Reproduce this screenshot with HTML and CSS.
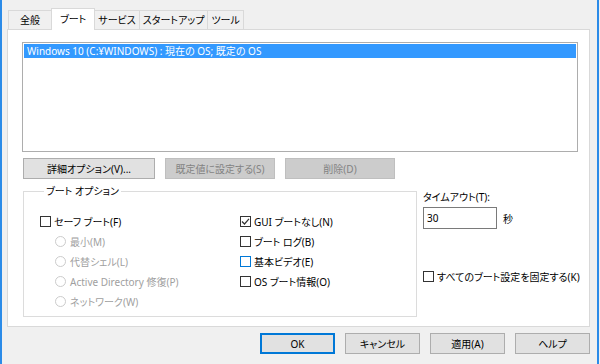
FILE: index.html
```html
<!DOCTYPE html>
<html lang="ja">
<head>
  <meta charset="UTF-8" />
  <title>システム構成</title>
  <link rel="stylesheet" href="styles.css">
</head>
<body>
  <div class="window">

    <!-- Tabs -->
    <div class="tabs">
      <div class="tab">全般</div>
      <div class="tab active">ブート</div>
      <div class="tab">サービス</div>
      <div class="tab">スタートアップ</div>
      <div class="tab">ツール</div>
    </div>

    <div class="panel">
      <div class="listbox">
        <div class="list-row selected">Windows 10 (C:¥WINDOWS) : 現在の OS; 既定の OS</div>
      </div>

      <div class="btn-row">
        <button class="btn wide">詳細オプション(V)...</button>
        <button class="btn mid" disabled>既定値に設定する(S)</button>
        <button class="btn mid" disabled>削除(D)</button>
      </div>

      <div class="lower">
        <fieldset class="group">
          <legend>ブート オプション</legend>
          <div class="cols">
            <div class="col">
              <div class="opt"><span class="box"></span>セーフ ブート(F)</div>
              <div class="opt radio"><span class="dot"></span>最小(M)</div>
              <div class="opt radio"><span class="dot"></span>代替シェル(L)</div>
              <div class="opt radio"><span class="dot"></span>Active Directory 修復(P)</div>
              <div class="opt radio"><span class="dot"></span>ネットワーク(W)</div>
            </div>
            <div class="col right">
              <div class="opt">
                <span class="box">
                  <svg width="9" height="9" viewBox="0 0 9 9"><path d="M1 4.5 L3.5 7 L8 1.8" fill="none" stroke="#333" stroke-width="1.2"/></svg>
                </span>GUI ブートなし(N)
              </div>
              <div class="opt"><span class="box"></span>ブート ログ(B)</div>
              <div class="opt"><span class="box focus"></span>基本ビデオ(E)</div>
              <div class="opt"><span class="box"></span>OS ブート情報(O)</div>
            </div>
          </div>
        </fieldset>

        <div class="side">
          <div class="timeout-label">タイムアウト(T):</div>
          <div class="timeout-row">
            <div class="textbox">30</div>
            <span>秒</span>
          </div>
          <div class="opt lock"><span class="box"></span>すべてのブート設定を固定する(K)</div>
        </div>
      </div>
    </div>

    <div class="footer">
      <button class="btn foot default">OK</button>
      <button class="btn foot">キャンセル</button>
      <button class="btn foot">適用(A)</button>
      <button class="btn foot">ヘルプ</button>
    </div>
  </div>
</body>
</html>
```

FILE: styles.css
```css
body {
  margin: 0;
  font-family: "Noto Sans", "Noto Sans CJK JP", sans-serif;
  font-size: 10px;
  font-feature-settings: "palt";
  color: #000;
  background: #f0f0f0;
}

.window {
  width: 599px;
  height: 364px;
  box-sizing: border-box;
  border-left: 2px solid #2b8be8;
  border-right: 2px solid #2b8be8;
  padding: 8px 0 0 5px;
  background: #f0f0f0;
}

/* Tabs */
.tabs {
  display: flex;
  align-items: flex-end;
  height: 21px;
  padding-left: 1px;
  position: relative;
  z-index: 1;
}

.tab {
  height: 19px;
  line-height: 19px;
  padding: 0 3px;
  box-sizing: border-box;
  border: 1px solid #d9d9d9;
  border-bottom: none;
  border-left: none;
  background: #f0f0f0;
  color: #000;
  white-space: nowrap;
}

.tab:first-child {
  border-left: 1px solid #d9d9d9;
  padding: 0 11px;
}

.tab.active {
  height: 22px;
  line-height: 20px;
  margin-bottom: -1px;
  background: #fff;
  border-left: 1px solid #d9d9d9;
  margin-left: -1px;
  padding: 0 8px;
}

.panel {
  width: 583px;
  height: 298px;
  box-sizing: border-box;
  border: 1px solid #d9d9d9;
  background: #fff;
  padding: 12px 0 0 14px;
}

.listbox {
  width: 556px;
  height: 110px;
  box-sizing: border-box;
  border: 1px solid #adadad;
  background: #fff;
  padding: 1px;
}

.list-row {
  height: 14px;
  line-height: 14px;
  padding-left: 3px;
}

.list-row.selected {
  background: #3399ff;
  color: #fff;
}

.btn-row {
  display: flex;
  gap: 10px;
  margin-top: 6px;
  padding-left: 1px;
}

.btn {
  height: 21px;
  box-sizing: border-box;
  border: 1px solid #adadad;
  background: #e1e1e1;
  font-family: inherit;
  font-size: 10px;
  font-feature-settings: "palt";
  color: #000;
  padding: 0;
}

.btn:disabled {
  background: #cccccc;
  border-color: #bfbfbf;
  color: #838383;
}

.btn.wide { width: 132px; }
.btn.mid { width: 110px; }

/* Boot options */
.lower {
  display: flex;
  margin-top: 4px;
  padding-left: 1px;
}

.group {
  width: 394px;
  flex-shrink: 0;
  min-inline-size: 0;
  height: 134px;
  box-sizing: border-box;
  margin: 0;
  border: 1px solid #dcdcdc;
  padding: 12px 0 0 16px;
}

.group legend {
  padding: 0 2px;
  margin-left: 4px;
  line-height: 16px;
}

.cols {
  display: flex;
}

.col {
  width: 200px;
}

.col.right {
  width: 170px;
}

.opt {
  display: flex;
  align-items: center;
  height: 20px;
  white-space: nowrap;
}

.box {
  width: 11px;
  height: 11px;
  box-sizing: border-box;
  border: 1px solid #333;
  background: #fff;
  margin-right: 3px;
  display: flex;
  align-items: center;
  justify-content: center;
}

.box.focus {
  border-color: #0078d7;
}

.radio {
  padding-left: 15px;
  color: #a0a0a0;
}

.dot {
  width: 11px;
  height: 11px;
  box-sizing: border-box;
  border: 1px solid #cccccc;
  border-radius: 50%;
  background: #fff;
  margin-right: 4px;
}

.side {
  padding-left: 6px;
  padding-top: 6px;
}

.timeout-label {
  line-height: 16px;
}

.timeout-row {
  display: flex;
  align-items: center;
  gap: 6px;
  margin-top: 2px;
}

.textbox {
  width: 74px;
  height: 22px;
  box-sizing: border-box;
  border: 1px solid #7a7a7a;
  padding: 2px 3px;
  line-height: 16px;
}

.lock {
  margin-top: 37px;
}

/* Footer */
.footer {
  display: flex;
  justify-content: flex-end;
  gap: 10px;
  margin-top: 6px;
  width: 583px;
}

.btn.foot {
  width: 75px;
}

.btn.default {
  border: 2px solid #0078d7;
}
```
